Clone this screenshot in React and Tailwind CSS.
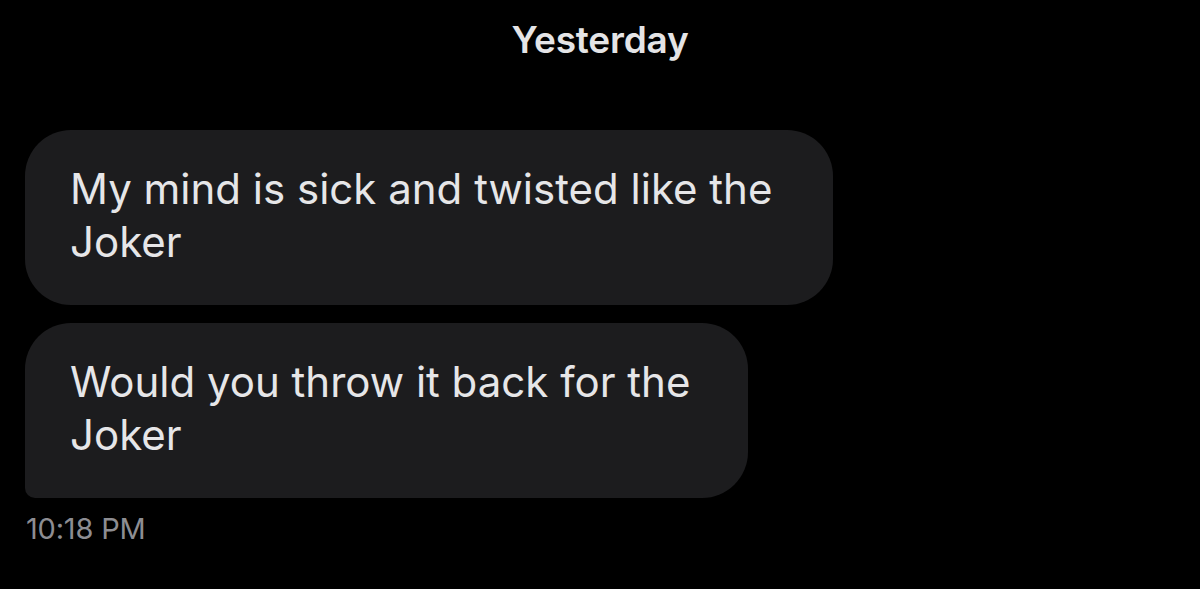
export default function App() {
  return (
    <div className="h-[589px] w-[1200px] overflow-hidden bg-black font-['Inter','Liberation_Sans',sans-serif]">
      <div className="pt-[16px] text-center text-[37px] font-semibold leading-[48px] tracking-[-0.2px] text-[#e4e4e6]">
        Yesterday
      </div>

      <div className="mt-[66px] flex flex-col gap-[18px] pl-[25px]">
        <div className="w-[808px] rounded-[46px] bg-[#1c1c1e] pl-[45px] pr-6 pt-8 pb-[37px] text-[42px] leading-[53px] text-[#e6e6e8]">
          My mind is sick and twisted like the
          <br />
          Joker
        </div>
        <div className="w-[723px] rounded-[46px] rounded-bl-[10px] bg-[#1c1c1e] pl-[45px] pr-6 pt-8 pb-[37px] text-[42px] leading-[53px] text-[#e6e6e8]">
          Would you throw it back for the
          <br />
          Joker
        </div>
      </div>

      <div className="pl-[26px] pt-[13px] text-[29px] leading-[36px] tracking-[-0.2px] text-[#8d8d92]">
        10:18 PM
      </div>
    </div>
  );
}
